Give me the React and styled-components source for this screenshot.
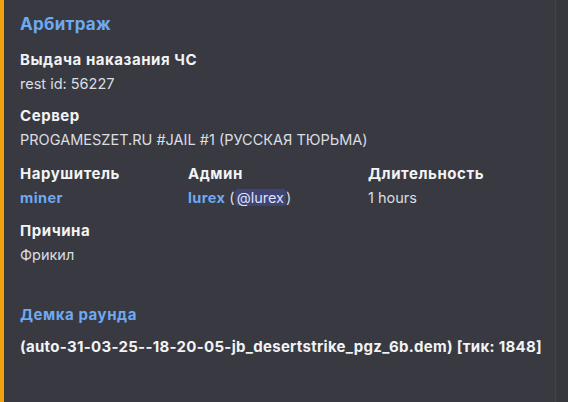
import styled, { createGlobalStyle } from "styled-components";

const Global = createGlobalStyle`
  body {
    margin: 0;
    background: #37383e;
    font-family: Inter, "Noto Sans", sans-serif;
  }
`;

export default function App() {
  return (
    <>
      <Global />
      <Embed>
        <Title>Арбитраж</Title>
        <Field>
          <Name>Выдача наказания ЧС</Name>
          <Value>rest id: 56227</Value>
        </Field>
        <Field $gap={10}>
          <Name>Сервер</Name>
          <Value>PROGAMESZET.RU #JAIL #1 (РУССКАЯ ТЮРЬМА)</Value>
        </Field>
        <InlineRow>
          <Field $gap={9}>
            <Name>Нарушитель</Name>
            <Value>
              <Link>miner</Link>
            </Value>
          </Field>
          <Field $gap={9}>
            <Name>Админ</Name>
            <Value>
              <Link>lurex</Link> (<Mention>@lurex</Mention>)
            </Value>
          </Field>
          <Field $gap={9}>
            <Name>Длительность</Name>
            <Value>1 hours</Value>
          </Field>
        </InlineRow>
        <Field>
          <Name>Причина</Name>
          <Value>Фрикил</Value>
        </Field>
        <Demo>
          <Name $link>Демка раунда</Name>
          <DemoText>(auto-31-03-25--18-20-05-jb_desertstrike_pgz_6b.dem) [тик: 1848]</DemoText>
        </Demo>
      </Embed>
    </>
  );
}

const Embed = styled.div`
  width: 556px;
  height: 402px;
  box-sizing: border-box;
  background: #393a41;
  border-left: 4px solid #f0a30a;
  border-right: 1px solid #43444b;
  padding: 12px 16px 0 16px;
  display: flex;
  flex-direction: column;
`;

const Title = styled.div`
  color: #6ea9f2;
  font-size: 17px;
  font-weight: 700;
  letter-spacing: 0.3px;
  line-height: 24px;
  margin-bottom: 12px;
`;

const Field = styled.div`
  display: flex;
  flex-direction: column;
  margin-bottom: ${(p) => p.$gap ?? 8}px;
`;

const Name = styled.div`
  color: ${(p) => (p.$link ? "#6ea9f2" : "#f2f3f5")};
  font-size: 15px;
  font-weight: 700;
  letter-spacing: 0.55px;
  line-height: 24px;
`;

const DemoText = styled(Name)`
  white-space: nowrap;
  letter-spacing: 0.3px;
`;

const Value = styled.div`
  color: #dbdee1;
  font-size: 14.5px;
  line-height: 24px;
`;

const InlineRow = styled.div`
  display: grid;
  grid-template-columns: 168px 180px 1fr;
`;

const Link = styled.span`
  color: #6ea9f2;
  font-weight: 700;
  letter-spacing: 0.4px;
`;

const Mention = styled.span`
  background: #3f4472;
  color: #dee0fc;
  border-radius: 3px;
  padding: 0 2px;
`;

const Demo = styled.div`
  margin-top: 28px;
  display: flex;
  flex-direction: column;
  gap: 8px;
`;
